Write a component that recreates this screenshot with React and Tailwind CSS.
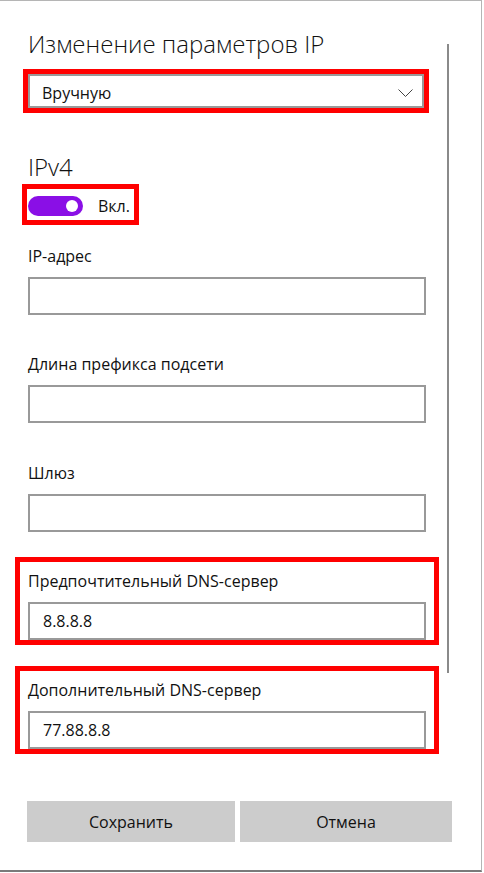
import React from 'react';

const font = { fontFamily: '"Open Sans", "Noto Sans", "Liberation Sans", sans-serif' };

const Field = ({ label, value, mt, framed }) => (
  <div className={`relative flex flex-col ${mt}`}>
    {framed && (
      <div className="absolute -left-[13px] -top-[14px] w-[424px] h-[88px] border-[5px] border-[#ff0000] pointer-events-none" />
    )}
    <div className="h-[20px] text-[16px] leading-[20px] text-[#111]">{label}</div>
    <div className="mt-[11px] h-[38px] w-[398px] border-2 border-[#999] bg-white flex items-center pl-[13px] text-[16px] text-[#111]">
      {value}
    </div>
  </div>
);

export default function App() {
  return (
    <div className="w-[484px] h-[873px] bg-white" style={font}>
      <div className="relative w-[482px] h-[872px] border-t border-r border-[#b5b5b5] border-b-2 border-b-[#7a7a7a] bg-white">
        {/* scrollbar */}
        <div className="absolute left-[447px] top-[43px] w-[2px] h-[629px] bg-[#8a8a8a]" />

        <div className="flex flex-col pl-[28px]">
          <h1 className="mt-[28px] h-[30px] text-[24px] leading-[30px] font-light text-[#111]">
            Изменение параметров IP
          </h1>

          {/* dropdown */}
          <div className="relative mt-[15px]">
            <div className="absolute -left-[5px] -top-[5px] w-[406px] h-[44px] border-[5px] border-[#ff0000]" />
            <div className="h-[34px] w-[396px] border-2 border-[#999] flex items-center justify-between pt-[3px] pl-[12px] pr-[9px] text-[16px] text-[#111]">
              <span>Вручную</span>
              <svg width="15" height="8" viewBox="0 0 15 8" fill="none">
                <path d="M0.5 0.5 L7.5 7.5 L14.5 0.5" stroke="#444" strokeWidth="1" />
              </svg>
            </div>
          </div>

          <div className="mt-[44px] h-[30px] text-[24px] leading-[30px] font-light text-[#111]">IPv4</div>

          {/* toggle */}
          <div className="relative mt-[14px] flex items-center h-[20px]">
            <div className="absolute -left-[6px] -top-[12px] w-[117px] h-[41px] border-[5px] border-[#ff0000]" />
            <div className="w-[55px] h-[20px] rounded-full bg-[#8a0fe6] flex items-center justify-end pr-[5px]">
              <div className="w-[12px] h-[12px] rounded-full bg-white" />
            </div>
            <span className="ml-[15px] text-[16px] text-[#111]">Вкл.</span>
          </div>

          <Field label="IP-адрес" mt="mt-[30px]" />
          <Field label="Длина префикса подсети" mt="mt-[39px]" />
          <Field label="Шлюз" mt="mt-[40px]" />
          <Field label="Предпочтительный DNS-сервер" value="8.8.8.8" mt="mt-[39px]" framed />
          <Field label="Дополнительный DNS-сервер" value="77.88.8.8" mt="mt-[40px]" framed />

          <div className="mt-[52px] flex gap-[5px] -ml-[1px]">
            <button className="w-[208px] h-[41px] bg-[#cccccc] text-[16px] text-[#111]">Сохранить</button>
            <button className="w-[212px] h-[41px] bg-[#cccccc] text-[16px] text-[#111]">Отмена</button>
          </div>
        </div>
      </div>
    </div>
  );
}
